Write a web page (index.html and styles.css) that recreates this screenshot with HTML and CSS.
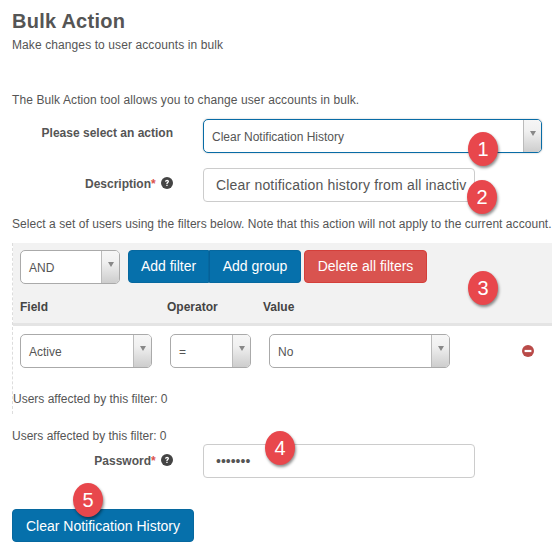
FILE: index.html
```html
<!DOCTYPE html>
<html lang="en">
<head>
    <meta charset="UTF-8">
    <title>Bulk Action</title>
    <link rel="stylesheet" href="styles.css">
</head>
<body>

<div class="page">
    <h1>Bulk Action</h1>
    <div class="subtitle">Make changes to user accounts in bulk</div>
    <p class="intro">The Bulk Action tool allows you to change user accounts in bulk.</p>

    <div class="form-row action-row">
        <label class="label-strong">Please select an action</label>
        <div class="select select-focus select-action">
            <span class="select-text">Clear Notification History</span>
            <span class="select-arrow"><i></i></span>
        </div>
    </div>

    <div class="form-row description-row">
        <label class="label-strong">Description<em>*</em>
            <svg class="help" viewBox="0 0 12 12"><circle cx="6" cy="6" r="6" fill="#444"/><path d="M4.1 4.7c0-1.2.9-1.9 2-1.9s1.9.7 1.9 1.7c0 1.3-1.4 1.3-1.4 2.4H5.3c0-1.7 1.3-1.7 1.3-2.4 0-.3-.2-.5-.6-.5s-.6.3-.6.7z M5.3 7.8h1.3v1.3H5.3z" fill="#fff"/></svg>
        </label>
        <div class="input input-large">Clear notification history from all inactiv</div>
    </div>

    <p class="note">Select a set of users using the filters below. Note that this action will not apply to the current account.</p>

    <div class="filter-box">
        <div class="filter-head">
            <div class="filter-tools">
                <div class="select select-and">
                    <span class="select-text">AND</span>
                    <span class="select-arrow"><i></i></span>
                </div>
                <div class="btn-group">
                    <button class="btn btn-blue btn-filter">Add filter</button>
                    <button class="btn btn-blue btn-add-group">Add group</button>
                </div>
                <button class="btn btn-red">Delete all filters</button>
            </div>
            <div class="filter-cols">
                <span class="col-field">Field</span>
                <span class="col-operator">Operator</span>
                <span>Value</span>
            </div>
        </div>
        <div class="filter-rule">
            <div class="select select-field">
                <span class="select-text">Active</span>
                <span class="select-arrow"><i></i></span>
            </div>
            <div class="select select-operator">
                <span class="select-text">=</span>
                <span class="select-arrow"><i></i></span>
            </div>
            <div class="select select-value">
                <span class="select-text">No</span>
                <span class="select-arrow"><i></i></span>
            </div>
            <svg class="remove" viewBox="0 0 12 12"><circle cx="6" cy="6" r="6" fill="#b94a48"/><rect x="2.6" y="4.9" width="6.8" height="2.2" fill="#fff"/></svg>
        </div>
        <div class="affected">Users affected by this filter: 0</div>
    </div>

    <div class="affected-total">Users affected by this filter: 0</div>

    <div class="form-row password-row">
        <label class="label-plain">Password<em>*</em>
            <svg class="help" viewBox="0 0 12 12"><circle cx="6" cy="6" r="6" fill="#444"/><path d="M4.1 4.7c0-1.2.9-1.9 2-1.9s1.9.7 1.9 1.7c0 1.3-1.4 1.3-1.4 2.4H5.3c0-1.7 1.3-1.7 1.3-2.4 0-.3-.2-.5-.6-.5s-.6.3-.6.7z M5.3 7.8h1.3v1.3H5.3z" fill="#fff"/></svg>
        </label>
        <div class="input input-small">&#8226;&#8226;&#8226;&#8226;&#8226;&#8226;&#8226;</div>
    </div>

    <button class="btn btn-blue btn-submit">Clear Notification History</button>
</div>

<!-- numbered callouts pasted over the screenshot -->
<span class="marker marker-1">1</span>
<span class="marker marker-2">2</span>
<span class="marker marker-3">3</span>
<span class="marker marker-4">4</span>
<span class="marker marker-5">5</span>

</body>
</html>
```

FILE: styles.css
```css
html, body {
    margin: 0;
    padding: 0;
}
body {
    position: relative;
    width: 560px;
    height: 552px;
    overflow: hidden;
    background-color: #fff;
    color: #555;
    font-family: "Liberation Sans", Arial, sans-serif;
    font-size: 12px;
    line-height: 17px;
}
.page {
    padding: 8px 0 0 12px;
}
h1 {
    margin: 0;
    font-size: 20px;
    line-height: 26px;
    font-weight: bold;
    color: #555;
    letter-spacing: 0.25px;
}
.subtitle {
    margin-top: 3px;
    letter-spacing: 0.1px;
}
.intro {
    margin: 38px 0 0;
    letter-spacing: 0.1px;
}
.note {
    margin: 14px 0 0;
    white-space: nowrap;
    letter-spacing: 0.05px;
}
.form-row {
    display: flex;
    align-items: flex-start;
}
.form-row label {
    width: 161px;
    margin-right: 30px;
    text-align: right;
    white-space: nowrap;
}
.action-row {
    margin-top: 10px;
}
.action-row label {
    padding-top: 6px;
}
.description-row {
    margin-top: 15px;
}
.description-row label {
    padding-top: 8px;
}
.password-row {
    margin-top: -1px;
}
.password-row label {
    padding-top: 9px;
}
.label-strong {
    font-weight: bold;
}
.label-plain {
    font-weight: bold;
}
.form-row em {
    color: #d9534f;
    font-style: normal;
}
.help {
    width: 12px;
    height: 12px;
    margin-left: 2px;
    vertical-align: -1px;
}

.select {
    box-sizing: border-box;
    display: flex;
    height: 34px;
    background-color: #fff;
    border: 1px solid #aaa;
    border-radius: 5px;
    overflow: hidden;
}
.select-text {
    flex: 1;
    padding-left: 8px;
    line-height: 34px;
    color: #555;
}
.select-arrow {
    width: 18px;
    display: flex;
    justify-content: center;
    padding-top: 11px;
    box-sizing: border-box;
    border-left: 1px solid #bbb;
    background: linear-gradient(#f6f6f6, #f0f0f0 35%, #cdcdcd);
}
.select-arrow i {
    width: 0;
    height: 0;
    border-left: 3px solid transparent;
    border-right: 3px solid transparent;
    border-top: 5px solid #888;
}
.select-focus {
    border-color: #086ca6;
    box-shadow: 0 0 2px rgba(0, 0, 0, 0.25);
}
.select-action {
    width: 339px;
}
.select-and {
    width: 100px;
}
.select-field {
    width: 132px;
}
.select-operator {
    width: 81px;
}
.select-value {
    width: 181px;
}

.input {
    box-sizing: border-box;
    height: 34px;
    width: 272px;
    background-color: #fff;
    border: 1px solid #ccc;
    border-radius: 4px;
    padding: 0 12px;
    line-height: 32px;
    color: #555;
    font-size: 14px;
    white-space: nowrap;
}
.input-large {
    letter-spacing: 0.18px;
}

.btn {
    box-sizing: border-box;
    height: 33px;
    border: 1px solid transparent;
    border-radius: 4px;
    color: #fff;
    font-family: inherit;
    font-size: 14px;
    padding: 0 0 2px;
}
.btn-blue {
    background-color: #0670ab;
    border-color: #06689f;
}
.btn-red {
    width: 123px;
    margin-left: 3px;
    background-color: #d9534f;
    border-color: #d43f3a;
}
.btn-group {
    display: flex;
    margin-left: 8px;
}
.btn-filter {
    width: 81px;
    border-radius: 4px 0 0 4px;
}
.btn-add-group {
    width: 92px;
    border-radius: 0 4px 4px 0;
    border-left-color: #05619a;
}
.btn-submit {
    display: block;
    width: 182px;
    margin-top: 31px;
    padding: 0;
}

.filter-box {
    width: 539px;
    margin: 10px 0 0 0;
    border-left: 1px dashed #ddd;
}
.filter-head {
    box-sizing: border-box;
    height: 83px;
    padding: 7px 0 0 7px;
    background-color: #f2f2f2;
    border-bottom: 3px solid #e4e4e4;
}
.filter-tools {
    display: flex;
    align-items: flex-start;
}
.filter-cols {
    display: flex;
    margin-top: 15px;
    font-weight: bold;
    color: #444;
}
.col-field {
    width: 147px;
}
.col-operator {
    width: 96px;
}
.filter-rule {
    display: flex;
    align-items: flex-start;
    margin-top: 8px;
    padding-left: 7px;
}
.select-operator {
    margin-left: 18px;
}
.select-value {
    margin-left: 18px;
}
.remove {
    width: 12px;
    height: 12px;
    margin: 11px 0 0 72px;
}
.affected {
    margin-top: 23px;
    padding-bottom: 6px;
}
.affected-total {
    margin-top: 14px;
}

.marker {
    position: absolute;
    width: 30px;
    height: 34px;
    border-radius: 50%;
    background-color: #e8474c;
    box-shadow: 1px 2px 3px rgba(0, 0, 0, 0.45);
    color: #fff;
    font-size: 20px;
    line-height: 34px;
    text-align: center;
}
.marker-1 {
    left: 468px;
    top: 132px;
}
.marker-2 {
    left: 467px;
    top: 180px;
}
.marker-3 {
    left: 468px;
    top: 271px;
}
.marker-4 {
    left: 265px;
    top: 431px;
}
.marker-5 {
    left: 73px;
    top: 483px;
}
```
